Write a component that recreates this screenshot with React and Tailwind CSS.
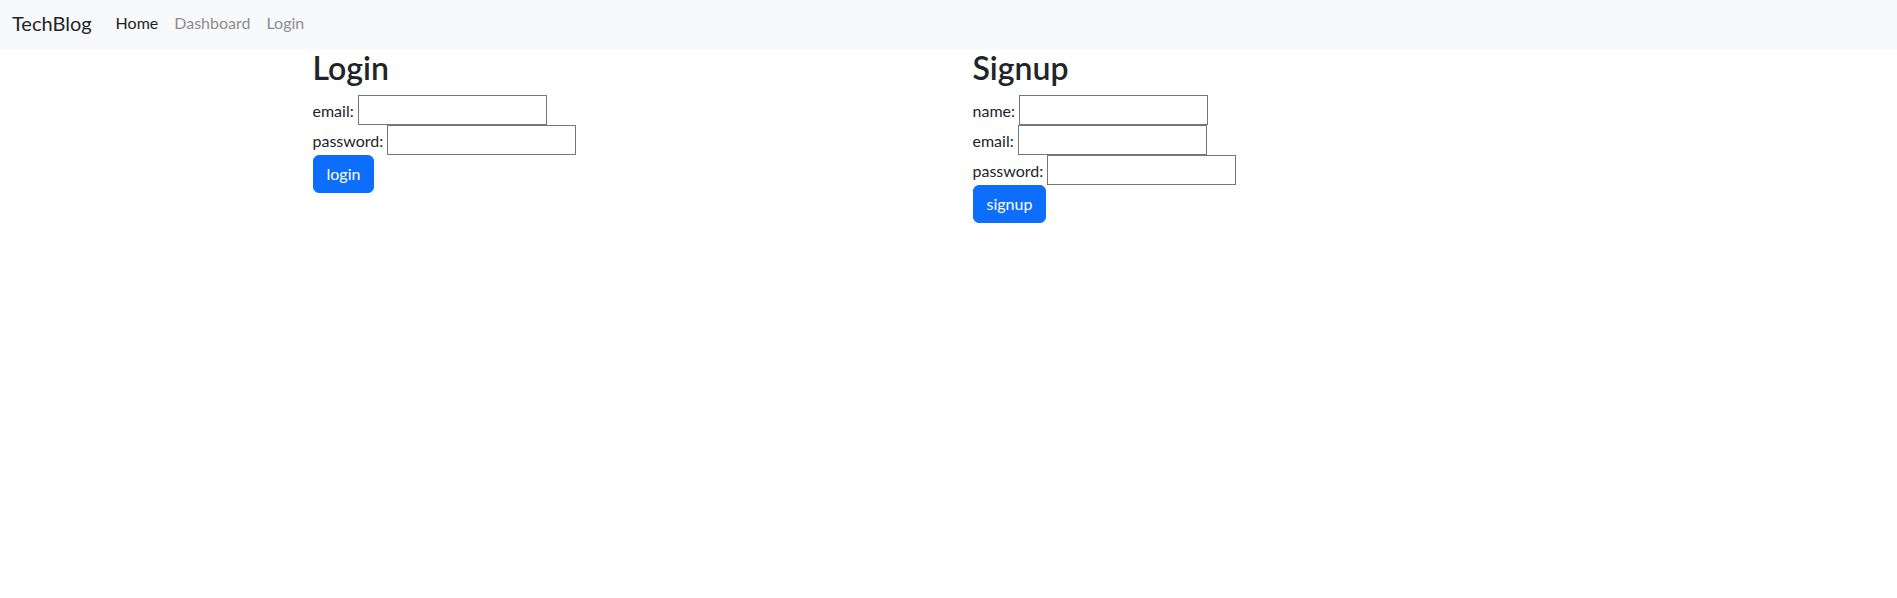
export default function App() {
  return (
    <div className="min-h-screen bg-white font-['Lato',sans-serif] text-base leading-normal text-[#212529]">
      <nav className="flex h-[49px] items-center bg-[#f8f9fa] px-3 pb-[3px]">
        <a href="#" className="mr-4 text-xl text-[#212529]">
          TechBlog
        </a>
        <ul className="flex">
          <li>
            <a href="#" className="px-2 text-[#1c1f23]">Home</a>
          </li>
          <li>
            <a href="#" className="px-2 text-[#8c8d8e]">Dashboard</a>
          </li>
          <li>
            <a href="#" className="px-2 text-[#8c8d8e]">Login</a>
          </li>
        </ul>
      </nav>

      <div className="mx-auto grid w-[1320px] grid-cols-[660px_1fr] pl-6">
        <div>
          <h2 className="mb-2 text-[32px] font-semibold leading-[1.2]">Login</h2>
          <form>
            <div className="h-[30px]">
              <label>email:</label>{' '}
              <input type="email" className="h-[30px] w-[189px] border border-[#767676] px-0.5" />
            </div>
            <div className="h-[30px]">
              <label>password:</label>{' '}
              <input type="password" className="h-[30px] w-[189px] border border-[#767676] px-0.5" />
            </div>
            <button
              type="button"
              className="rounded-md border border-[#0d6efd] bg-[#0d6efd] px-[13px] py-[6px] text-white"
            >
              login
            </button>
          </form>
        </div>

        <div>
          <h2 className="mb-2 text-[32px] font-semibold leading-[1.2]">Signup</h2>
          <form>
            <div className="h-[30px]">
              <label>name:</label>{' '}
              <input type="text" className="h-[30px] w-[189px] border border-[#767676] px-0.5" />
            </div>
            <div className="h-[30px]">
              <label>email:</label>{' '}
              <input type="email" className="h-[30px] w-[189px] border border-[#767676] px-0.5" />
            </div>
            <div className="h-[30px]">
              <label>password:</label>{' '}
              <input type="password" className="h-[30px] w-[189px] border border-[#767676] px-0.5" />
            </div>
            <button
              type="button"
              className="rounded-md border border-[#0d6efd] bg-[#0d6efd] px-[13px] py-[6px] text-white"
            >
              signup
            </button>
          </form>
        </div>
      </div>
    </div>
  );
}
